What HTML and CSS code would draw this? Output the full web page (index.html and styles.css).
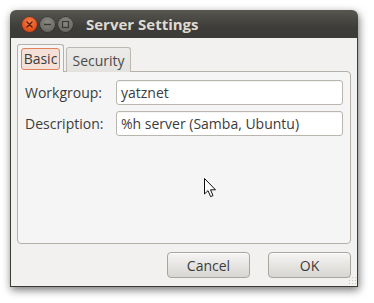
FILE: index.html
```html
<!DOCTYPE html>
<html>
<head>
<meta charset="utf-8">
<link rel="stylesheet" href="styles.css">
</head>
<body>
<div class="window">
  <div class="titlebar">
    <div class="controls">
      <span class="btn close"><svg width="15" height="15" viewBox="0 0 15 15"><path d="M5 5 L10 10 M10 5 L5 10" stroke="#5a1a08" stroke-width="1.3" stroke-linecap="round"/></svg></span>
      <span class="btn gray"><svg width="15" height="15" viewBox="0 0 15 15"><path d="M4 7.5 H11" stroke="#3a3935" stroke-width="1.4"/></svg></span>
      <span class="btn gray"><svg width="15" height="15" viewBox="0 0 15 15"><rect x="4.5" y="4.5" width="6" height="6" fill="none" stroke="#3a3935" stroke-width="1.2"/></svg></span>
    </div>
    <div class="title">Server Settings</div>
  </div>
  <div class="body">
    <div class="notebook">
      <div class="tabs">
        <div class="tab active"><span class="focus">Basic</span></div>
        <div class="tab">Security</div>
      </div>
      <div class="panel">
        <div class="form">
          <label class="label">Workgroup:</label>
          <div class="entry">yatznet</div>
          <label class="label">Description:</label>
          <div class="entry">%h server (Samba, Ubuntu)</div>
        </div>
      </div>
    </div>
    <div class="actions">
      <button class="button">Cancel</button>
      <button class="button">OK</button>
    </div>
    <div class="grip"></div>
  </div>
</div>
<svg class="cursor" width="14" height="21" viewBox="0 0 14 21"><path d="M0.5 0.5 L0.5 16 L4 12.6 L6.6 18.6 L9 17.6 L6.5 11.8 L11.5 11.8 Z" fill="#fff" stroke="#111" stroke-width="1" stroke-linejoin="miter"/></svg>
</body>
</html>
```
FILE: styles.css
```css
html, body {
  margin: 0;
  padding: 0;
  background: #ffffff;
}
body {
  width: 374px;
  height: 303px;
  overflow: hidden;
  position: relative;
  font-family: "Open Sans", "DejaVu Sans", sans-serif;
  font-size: 14px;
  color: #3c3c3c;
}
.window {
  margin: 10px 0 0 10px;
  width: 348px;
  height: 277px;
  display: flex;
  flex-direction: column;
  border-radius: 6px 6px 0 0;
  box-shadow: 1px 3px 8px rgba(0,0,0,0.55);
}
.titlebar {
  height: 28px;
  flex: none;
  display: flex;
  align-items: center;
  padding-left: 12px;
  border-radius: 6px 6px 0 0;
  background: linear-gradient(#575651, #3e3d39 60%, #3c3b37);
}
.controls {
  display: flex;
  gap: 3px;
}
.btn {
  width: 15px;
  height: 15px;
  border-radius: 50%;
  display: block;
}
.btn svg { display: block; }
.close {
  background: radial-gradient(circle at 50% 35%, #f4844f, #e2531f 60%, #c8421a);
  box-shadow: 0 0 0 0.5px #6b2a12;
}
.gray {
  background: radial-gradient(circle at 50% 35%, #8a8983, #6f6e69 60%, #5d5c57);
  box-shadow: 0 0 0 0.5px #2e2d2a;
}
.title {
  margin-left: 13px;
  font-weight: bold;
  font-size: 15px;
  color: #dfdbd2;
}
.body {
  flex: 1;
  display: flex;
  flex-direction: column;
  background: #f2f1f0;
  border: 1px solid #3c3b37;
  border-top: none;
  padding: 7px 6px 7px 6px;
  position: relative;
}
.notebook {
  display: flex;
  flex-direction: column;
}
.tabs {
  display: flex;
  align-items: flex-end;
  gap: 2px;
  height: 27px;
  position: relative;
  z-index: 1;
  margin-bottom: -1px;
}
.tab {
  height: 25px;
  box-sizing: border-box;
  padding: 0 5px;
  display: flex;
  align-items: center;
  justify-content: center;
  border: 1px solid #bdb9b2;
  border-bottom: none;
  border-radius: 3px 3px 0 0;
  background: linear-gradient(#ecebe9, #e3e2df);
  color: #4a4a4a;
  min-width: 65px;
}
.tab.active {
  height: 28px;
  min-width: 0;
  width: 47px;
  padding: 0 3px;
  background: #f5f5f5;
  border-color: #b5b1aa;
}
.focus {
  display: flex;
  align-items: center;
  justify-content: center;
  height: 22px;
  box-sizing: border-box;
  width: 40px;
  border: 1px solid #e2825c;
  border-radius: 3px;
  background: #f4e0d7;
  color: #3c3c3c;
}
.panel {
  height: 173px;
  box-sizing: border-box;
  border: 1px solid #b5b1aa;
  border-radius: 0 4px 4px 4px;
  background: #f5f5f5;
  padding: 8px 7px;
}
.form {
  display: grid;
  grid-template-columns: 84px 1fr;
  column-gap: 7px;
  row-gap: 6px;
  align-items: center;
}
.label {
  white-space: nowrap;
  color: #3c3c3c;
}
.entry {
  height: 25px;
  box-sizing: border-box;
  border: 1px solid #b9b6b0;
  border-radius: 3px;
  background: #ffffff;
  padding: 0 4px;
  display: flex;
  align-items: center;
  color: #3c3c3c;
  box-shadow: inset 0 1px 1px rgba(0,0,0,0.05);
}
.actions {
  margin-top: 8px;
  display: flex;
  justify-content: flex-end;
  gap: 18px;
}
.button {
  width: 83px;
  height: 26px;
  border: 1px solid #a9a59f;
  border-radius: 4px;
  background: linear-gradient(#f6f5f4, #e4e2df 60%, #d8d6d2);
  font-family: inherit;
  font-size: 14px;
  color: #3c3c3c;
  padding: 0;
  box-shadow: inset 0 1px 0 rgba(255,255,255,0.7);
}
.grip {
  position: absolute;
  right: 1px;
  bottom: 1px;
  width: 8px;
  height: 9px;
  background-image: radial-gradient(circle, #c9c6c0 0.8px, transparent 1px);
  background-size: 3px 3px;
}
.cursor {
  position: absolute;
  left: 204px;
  top: 178px;
}
```
